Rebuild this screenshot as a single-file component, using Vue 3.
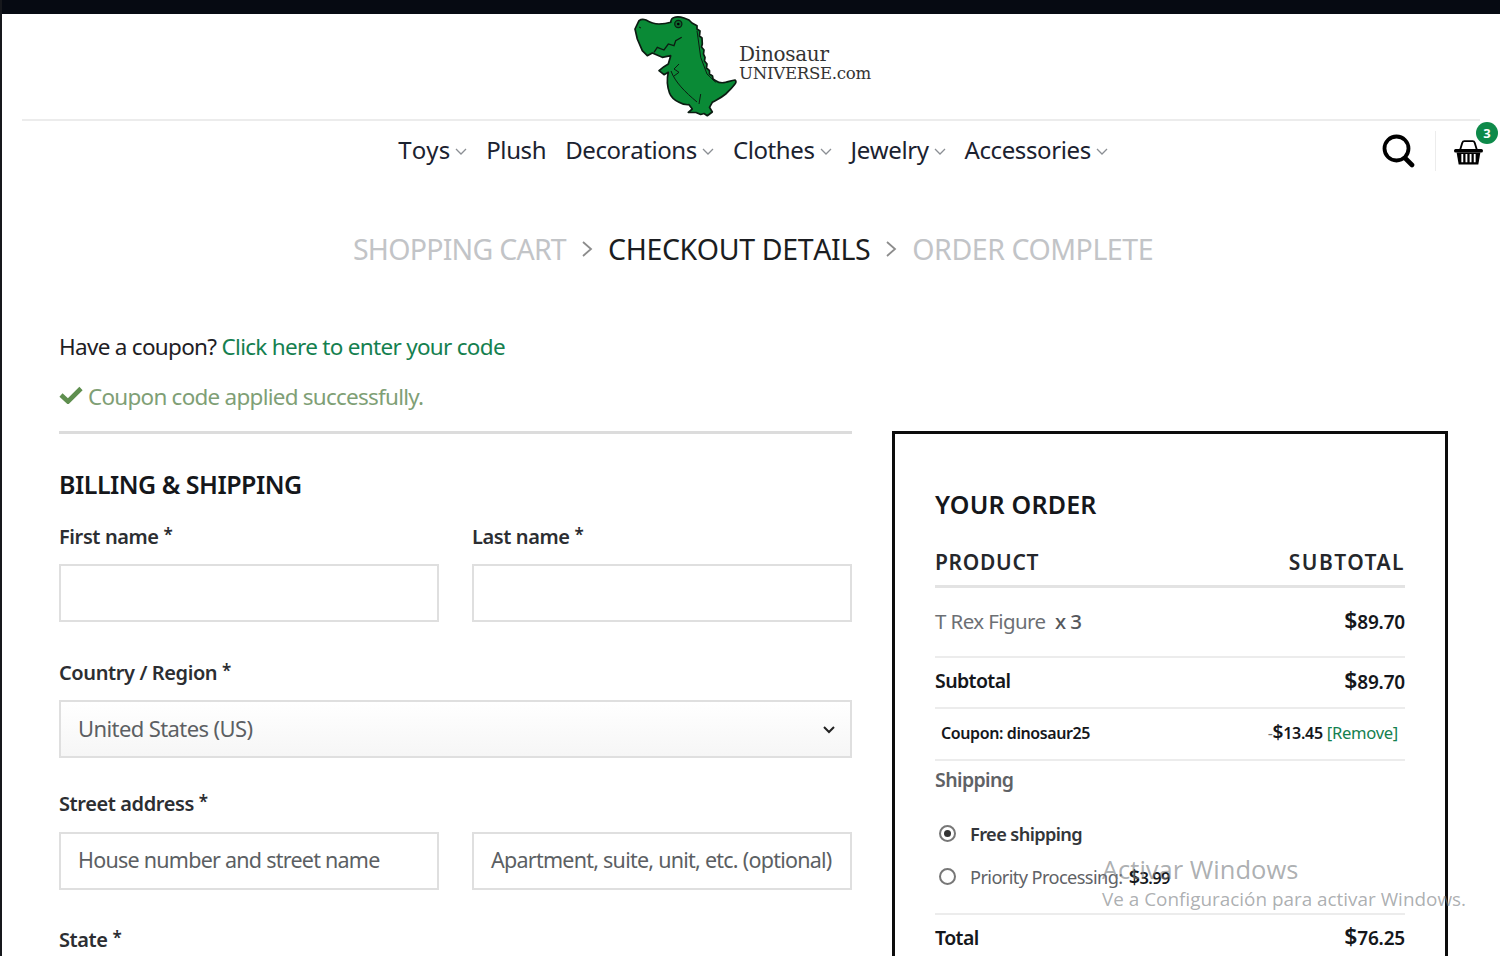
<script setup>
const navItems = [
  { label: 'Toys', caret: true },
  { label: 'Plush', caret: false },
  { label: 'Decorations', caret: true },
  { label: 'Clothes', caret: true },
  { label: 'Jewelry', caret: true },
  { label: 'Accessories', caret: true },
]
</script>

<template>
  <div class="page">
    <div class="topbar"></div>
    <header class="logo-row">
      <svg class="dino" viewBox="630 14 110 105" width="110" height="105" aria-hidden="true">
        <path d="M640 20.700 C643 18.500 645 19.500 647 20 C652 23 656 24 660 24 C664 24 668 23.500 671.700 22.300 C672 19.500 673 18 675 17.500 C679 16 682 17 685 18 L690 20 L693 23 L698 25.700 L698 29 L701 31 L700.500 36 L703 38 L703.300 44 L702.500 47 L705 50 L704.500 54 L706 57.300 L705.500 61 L708 64 L707.500 68 L710.500 70.700 L710.500 74 L713.500 76 L714 79 L716.700 80.700 C720 83 724 83 726.700 82.300 C730 81.500 733 80.500 736 80 C737.500 81 737 83 736 84 C733 88 730 91 726.700 94 C722 98 717 100 713.300 102.300 L710.500 107.300 L713.300 112 L708.300 115.700 L705 113.500 L701.700 114.500 L697 112.500 L689.300 112.300 L693.300 109 L690 104.700 C686 105 683 104 680 102.300 C675 100 672 97 670.500 93 C668 86 668 78 669.300 72.300 L665 74.700 L660 70.700 L665 66.700 L669.300 64 L671.700 55.700 L663.300 57.300 L653.300 53 L648.300 55.700 L643.300 50.700 L638.300 39 L636 29 Z" fill="#0a8a36" stroke="#0c1c12" stroke-width="1.700" stroke-linejoin="round"/>
        <path d="M655 52.300 L658.300 47.300 L665 50 L669.300 44 L675 45.700 L676.700 40.700 L682.700 37.300" fill="none" stroke="#0c1c12" stroke-width="1.300"/>
        <path d="M680 64 L675 69 L680 72.300 L675 76 M672 71 C676 82 686 92 698 102 M701.700 94 L700 104 M698 30.700 L701.700 57.300 L708 74 L716.700 82.300 M640 27 L642 28" fill="none" stroke="#0c1c12" stroke-width="1"/>
        <circle cx="679.300" cy="24" r="3.600" fill="#0a6a2c" stroke="#0c1c12" stroke-width="1.200"/>
        <circle cx="679.300" cy="24" r="1.300" fill="#000"/>
      </svg>
      <div class="logo-text">
        <div class="logo-line1">Dinosaur</div>
        <div class="logo-line2">UNIVERSE.com</div>
      </div>
    </header>

    <nav class="nav-row">
      <div class="nav-spacer"></div>
      <ul class="nav">
        <li v-for="item in navItems" :key="item.label" class="nav-item">
          <span>{{ item.label }}</span>
          <svg v-if="item.caret" class="caret" viewBox="0 0 12 7" width="12" height="7" aria-hidden="true">
            <path d="M1 1 L6 6 L11 1" fill="none" stroke="#8b8f94" stroke-width="1.300"/>
          </svg>
        </li>
      </ul>
      <div class="nav-icons">
        <svg class="search" viewBox="0 0 34 34" width="34" height="34" aria-hidden="true">
          <circle cx="15.500" cy="14.500" r="12" fill="none" stroke="#000" stroke-width="3.800"/>
          <path d="M24 24 L31 31" stroke="#000" stroke-width="4.600" stroke-linecap="round"/>
        </svg>
        <span class="icon-sep"></span>
        <div class="cart">
          <svg viewBox="0 0 30 28" width="31" height="29" aria-hidden="true">
            <path d="M7 12 L9 5.500 Q9.500 4 11 4 L19 4 Q20.500 4 21 5.500 L23 12" fill="none" stroke="#000" stroke-width="1.800"/>
            <rect x="1" y="11.500" width="28" height="3.500" rx="1.500" fill="#000"/>
            <path d="M3.500 15 L5.500 26.500 L24.500 26.500 L26.500 15 Z" fill="#000"/>
            <path d="M9 16.500 V24.500 M13 16.500 V24.500 M17 16.500 V24.500 M21 16.500 V24.500" stroke="#fff" stroke-width="1.800"/>
          </svg>
          <span class="badge">3</span>
        </div>
      </div>
    </nav>

    <div class="steps">
      <span class="step muted first">SHOPPING CART</span>
      <svg class="chev" viewBox="0 0 12 18" width="12" height="18" aria-hidden="true"><path d="M2 2 L10 9 L2 16" fill="none" stroke="#8c8c8c" stroke-width="1.800"/></svg>
      <span class="step current">CHECKOUT DETAILS</span>
      <svg class="chev" viewBox="0 0 12 18" width="12" height="18" aria-hidden="true"><path d="M2 2 L10 9 L2 16" fill="none" stroke="#8c8c8c" stroke-width="1.800"/></svg>
      <span class="step muted last">ORDER COMPLETE</span>
    </div>

    <main class="content">
      <p class="coupon-q">Have a coupon? <a class="link">Click here to enter your code</a></p>
      <p class="coupon-ok">
        <svg viewBox="0 0 24 18" width="24" height="18" aria-hidden="true"><path d="M2 9 L9 15.500 L22 2.500" fill="none" stroke="#5f8f4f" stroke-width="4.600"/></svg>
        <span>Coupon code applied successfully.</span>
      </p>

      <div class="columns">
        <section class="billing">
          <h2 class="billing-title">BILLING &amp; SHIPPING</h2>
          <div class="two">
            <div class="field">
              <label>First name <sup>*</sup></label>
              <div class="input"></div>
            </div>
            <div class="field">
              <label>Last name <sup>*</sup></label>
              <div class="input"></div>
            </div>
          </div>
          <div class="field country">
            <label>Country / Region <sup>*</sup></label>
            <div class="input select">
              <span>United States (US)</span>
              <svg viewBox="0 0 14 9" width="14" height="9" aria-hidden="true"><path d="M2 2 L7 7 L12 2" fill="none" stroke="#222" stroke-width="2"/></svg>
            </div>
          </div>
          <div class="two street">
            <div class="field">
              <label>Street address <sup>*</sup></label>
              <div class="input ph">House number and street name</div>
            </div>
            <div class="field">
              <label class="blank">&nbsp;</label>
              <div class="input ph">Apartment, suite, unit, etc. (optional)</div>
            </div>
          </div>
          <div class="field state">
            <label>State <sup>*</sup></label>
          </div>
        </section>

        <aside class="order">
          <h2 class="order-title">YOUR ORDER</h2>
          <div class="row head"><span>PRODUCT</span><span class="head-sub">SUBTOTAL</span></div>
          <div class="row product">
            <span class="prod-name">T Rex Figure <b>&nbsp;x 3</b></span>
            <b class="price"><span class="dollar">$</span>89.70</b>
          </div>
          <div class="row subtotal"><b>Subtotal</b><b class="price"><span class="dollar">$</span>89.70</b></div>
          <div class="row coupon">
            <b>Coupon: dinosaur25</b>
            <span class="coupon-side"><b><span class="dash">-</span><span class="dollar-sm">$</span>13.45</b> <a class="link">[Remove]</a></span>
          </div>
          <div class="shipping">
            <div class="ship-title">Shipping</div>
            <div class="radio-row free"><span class="radio on"></span><b>Free shipping</b></div>
            <div class="radio-row"><span class="radio"></span><span>Priority Processing: <b class="dark"><span class="dollar-sm">$</span>3.99</b></span></div>
          </div>
          <div class="row total"><b>Total</b><b class="price"><span class="dollar">$</span>76.25</b></div>
        </aside>
      </div>
    </main>

    <div class="watermark">
      <div class="wm1">Activar Windows</div>
      <div class="wm2">Ve a Configuración para activar Windows.</div>
    </div>
  </div>
</template>

<style>
html, body { margin: 0; padding: 0; background: #fff; overflow: hidden; }
</style>

<style scoped>
.page {
  position: relative;
  width: 1500px;
  height: 956px;
  overflow: hidden;
  box-sizing: border-box;
  border-left: 2px solid #16181c;
  background: #fff;
  color: #1b1d21;
  font-family: "Noto Sans", "Open Sans", sans-serif;
}
.topbar { height: 14px; margin-left: -2px; background: #060a12; }
.logo-row {
  height: 105px;
  margin: 0 20px;
  border-bottom: 2px solid #ececec;
  display: flex;
  justify-content: center;
  align-items: flex-start;
}
.dino { display: block; margin-left: -2px; }
.logo-text { padding-top: 28px; color: #333; font-family: "DejaVu Serif", serif; }
.logo-line1 { font-size: 20px; line-height: 24px; letter-spacing: -0.3px; }
.logo-line2 { font-size: 16.600px; line-height: 15px; letter-spacing: -0.3px; white-space: nowrap; }

.nav-row {
  height: 56px;
  padding-left: 4px;
  display: grid;
  grid-template-columns: 1fr auto 1fr;
  align-items: center;
}
.nav { list-style: none; margin: 0; padding: 0; display: flex; gap: 19px; }
.nav-item { display: flex; align-items: center; gap: 5px; font-size: 24px; letter-spacing: -0.4px; font-kerning: none; color: #1b2230; white-space: nowrap; }
.nav-item:first-child { letter-spacing: 0.1px; }
.caret { margin-top: 4px; }
.nav-icons { display: flex; justify-content: flex-end; align-items: center; padding-right: 16px; margin-top: 4px; }
.search { display: block; }
.icon-sep { width: 1px; height: 40px; background: #ececec; margin: 0 17px 0 20px; }
.cart { position: relative; display: block; height: 29px; }
.cart svg { display: block; }
.badge {
  position: absolute;
  top: -15px;
  right: -14px;
  width: 22px;
  height: 22px;
  border-radius: 50%;
  background: #0e8a4a;
  color: #fff;
  font-size: 13px;
  font-weight: 700;
  line-height: 22px;
  text-align: center;
}

.steps {
  margin-top: 47px;
  height: 50px;
  display: flex;
  justify-content: center;
  align-items: center;
  gap: 15px;
  padding-left: 4px;
  font-size: 28.500px;
  letter-spacing: -0.6px;
  color: #1b1d21;
  white-space: nowrap;
}
.current { font-kerning: none; letter-spacing: -0.35px; }
.muted { color: #c2c4c7; }
.first { letter-spacing: -0.75px; }
.last { letter-spacing: -0.45px; }

.content { padding: 0 0 0 57px; }
.coupon-q { margin: 57px 0 0; font-size: 22.500px; line-height: 32px; letter-spacing: -0.7px; color: #1e2024; }
.link { color: #14804f; }
.coupon-ok {
  margin: 18px 0 0;
  display: flex;
  align-items: center;
  gap: 5px;
  font-size: 22.500px;
  line-height: 32px;
  letter-spacing: -0.76px;
  color: #7f9f76;
}
.coupon-ok svg { margin-top: -4px; }

.columns { margin-top: 18px; display: flex; align-items: flex-start; gap: 40px; }
.billing { width: 793px; flex: none; border-top: 3px solid #dcdcdc; }
.billing-title { margin: 32px 0 0; font-size: 25px; line-height: 36px; font-weight: 600; letter-spacing: -0.5px; color: #15171b; }
.two { display: grid; grid-template-columns: 380px 380px; column-gap: 33px; margin-top: 21px; }
.field label { display: block; font-size: 20px; line-height: 28px; font-weight: 600; letter-spacing: -0.4px; color: #2c2e32; white-space: nowrap; }
.field sup { font-size: 17px; line-height: 0; vertical-align: 3px; }
.input {
  height: 58px;
  margin-top: 13px;
  box-sizing: border-box;
  border: 2px solid #dfdfdf;
  display: flex;
  align-items: center;
  padding: 0 17px 3px;
  font-size: 22px;
  letter-spacing: -0.6px;
  color: #5c5f63;
  white-space: nowrap;
}
.ph { font-size: 21.500px; letter-spacing: -0.75px; }
.country { margin-top: 37px; }
.select { justify-content: space-between; background: linear-gradient(#fff, #f6f6f6); padding-right: 14px; }
.select svg { margin-top: 3px; }
.street { margin-top: 32px; }
.street .input { margin-top: 14px; }
.state { margin-top: 36px; }

.order {
  width: 556px;
  height: 640px;
  flex: none;
  box-sizing: border-box;
  border: 3px solid #0c0c0c;
  padding: 52px 40px 0;
}
.order-title { margin: 0; font-size: 25px; line-height: 36px; font-weight: 600; letter-spacing: 0.2px; color: #15171b; }
.row { display: flex; justify-content: space-between; align-items: center; border-bottom: 2px solid #ececec; white-space: nowrap; }
.row b { font-weight: 600; color: #15171b; }
.head { margin-top: 13px; height: 47px; padding-top: 3px; border-bottom: 3px solid #e3e3e3; font-size: 21px; font-weight: 600; letter-spacing: 0.7px; color: #25272b; }
.head-sub { letter-spacing: 1.450px; }
.product { height: 66px; padding-bottom: 2px; font-size: 20.500px; letter-spacing: -0.6px; color: #6c6f74; }
.price { font-size: 19px; letter-spacing: -0.2px; padding-bottom: 2px; }
.dollar { font-size: 23px; }
.dollar-sm { font-size: 1.200em; }
.dash { font-weight: 400; color: #777; }
.prod-name b { font-weight: 500; color: #55585c; }
.subtotal { height: 45px; padding-bottom: 4px; font-size: 19.500px; letter-spacing: -0.6px; }
.coupon { height: 48px; padding: 0 7px 2px 6px; font-size: 16px; letter-spacing: -0.4px; }
.coupon-side { font-size: 16.600px; letter-spacing: -0.3px; padding-bottom: 3px; }
.coupon-side b { font-size: 16px; }
.shipping { height: 152px; border-bottom: 2px solid #ececec; color: #5f6266; font-size: 19.500px; letter-spacing: -0.6px; }
.ship-title { font-weight: 600; line-height: 38px; }
.radio-row { display: flex; align-items: center; gap: 14px; margin: 0 0 0 4px; height: 43px; white-space: nowrap; font-size: 18.200px; letter-spacing: -0.6px; }
.free { margin-top: 13px; }
.radio-row b { font-weight: 600; color: #33363a; }
.radio-row b.dark { color: #15171b; font-size: 16.500px; margin-left: 2px; }
.radio { width: 17px; height: 17px; box-sizing: border-box; border: 2px solid #777; border-radius: 50%; display: block; position: relative; flex: none; }
.radio.on::after { content: ""; position: absolute; left: 3px; top: 3px; width: 7px; height: 7px; border-radius: 50%; background: #333; }
.total { height: 44px; padding-bottom: 6px; border: 0; font-size: 19.500px; letter-spacing: -0.6px; }

.watermark {
  position: absolute;
  left: 1100px;
  top: 852px;
  color: rgba(120, 124, 128, 0.62);
  font-family: "Open Sans", sans-serif;
  white-space: nowrap;
  pointer-events: none;
}
.wm1 { font-size: 25.500px; line-height: 34px; }
.wm2 { font-size: 18.900px; line-height: 26px; }
</style>
